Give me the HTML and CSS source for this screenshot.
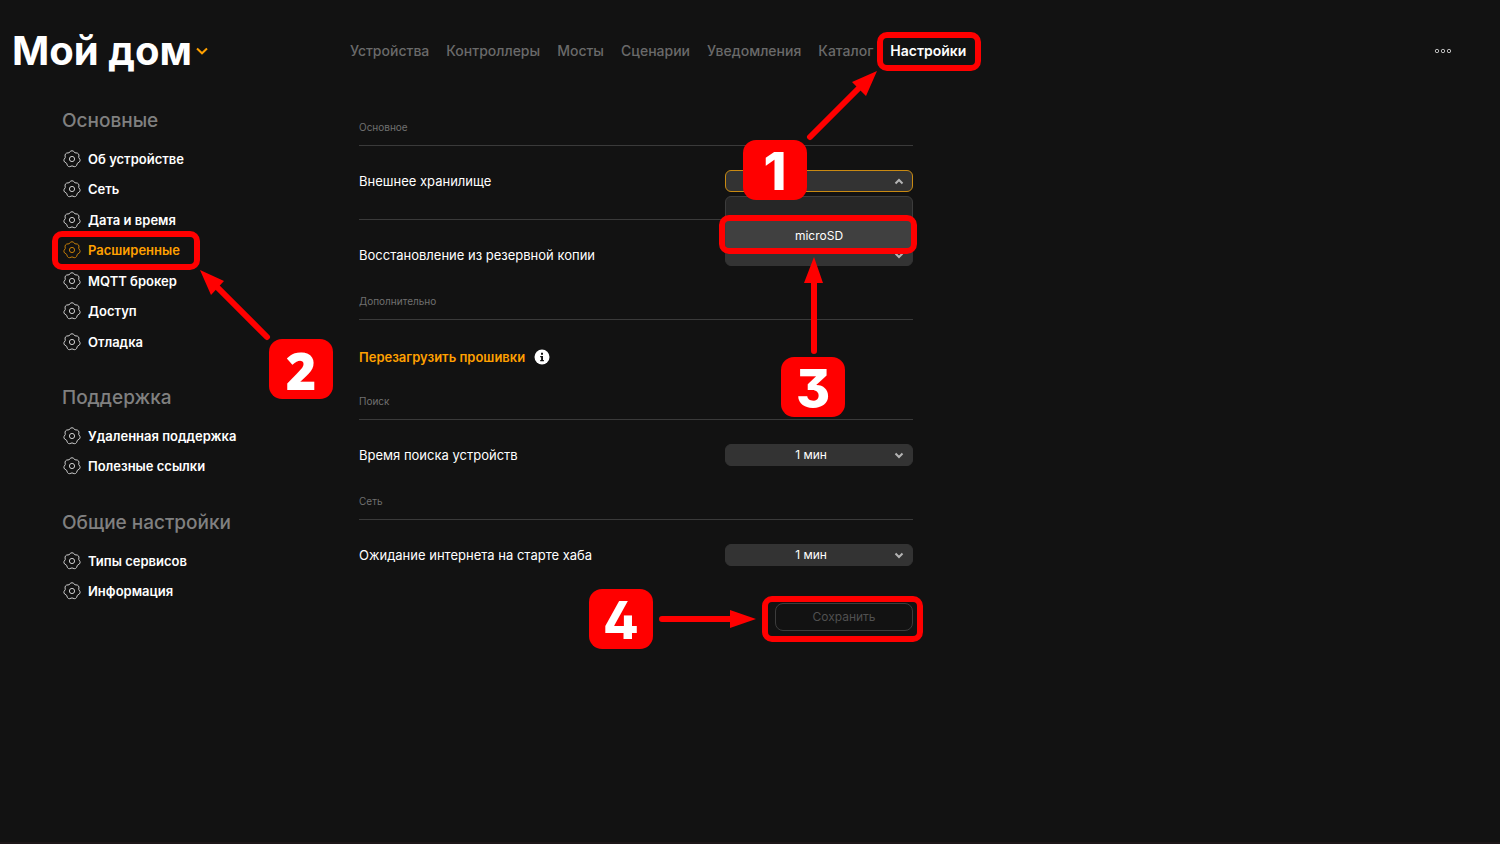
FILE: index.html
```html
<!DOCTYPE html>
<html lang="ru">
<head>
  <meta charset="UTF-8">
  <title>Мой дом - Настройки</title>
  <meta name="viewport" content="width=device-width, initial-scale=1.0">
  <link rel="stylesheet" href="styles.css">
</head>
<body>
  <svg class="sprite" aria-hidden="true">
    <symbol id="gear" viewBox="-9 -9 18 18">
      <path d="M-1.25-7.9Q0-8.6 1.25-7.9L2.99-6.22L5.4-5.91Q6.6-5.4 6.96-3.95L6.73-1.54L7.98.54Q8.4 1.9 7.42 2.98L5.39 4.3L4.55 6.58Q3.7 7.8 2.3 7.66L0 6.9L-2.3 7.66Q-3.7 7.8-4.55 6.58L-5.39 4.3L-7.42 2.98Q-8.4 1.9-7.98.54L-6.73-1.54L-6.96-3.95Q-6.6-5.4-5.4-5.91L-2.99-6.22Z"/>
      <circle r="2.6"/>
    </symbol>
  </svg>

  <header class="header">
    <h1 class="title">
      <button class="home-btn" type="button">Мой дом
        <svg class="home-arrow" viewBox="0 0 12 8"><path d="M1 1.5l5 4.8 5-4.8"/></svg>
      </button>
    </h1>
    <nav class="nav">
      <a href="#">Устройства</a>
      <a href="#">Контроллеры</a>
      <a href="#">Мосты</a>
      <a href="#">Сценарии</a>
      <a href="#">Уведомления</a>
      <a href="#">Каталог</a>
      <a href="#" class="active">Настройки</a>
    </nav>
    <button class="more" type="button" aria-label="Меню">
      <svg viewBox="0 0 18 6"><circle cx="3" cy="3" r="1.7"/><circle cx="9" cy="3" r="1.7"/><circle cx="15" cy="3" r="1.7"/></svg>
    </button>
  </header>

  <div class="layout">
    <aside class="sidebar">
      <h2>Основные</h2>
      <ul class="menu">
        <li><a href="#"><svg><use href="#gear"/></svg>Об устройстве</a></li>
        <li><a href="#"><svg><use href="#gear"/></svg>Сеть</a></li>
        <li><a href="#"><svg><use href="#gear"/></svg>Дата и время</a></li>
        <li><a href="#" class="active"><svg><use href="#gear"/></svg>Расширенные</a></li>
        <li><a href="#"><svg><use href="#gear"/></svg>MQTT брокер</a></li>
        <li><a href="#"><svg><use href="#gear"/></svg>Доступ</a></li>
        <li><a href="#"><svg><use href="#gear"/></svg>Отладка</a></li>
      </ul>
      <h2>Поддержка</h2>
      <ul class="menu">
        <li><a href="#"><svg><use href="#gear"/></svg>Удаленная поддержка</a></li>
        <li><a href="#"><svg><use href="#gear"/></svg>Полезные ссылки</a></li>
      </ul>
      <h2>Общие настройки</h2>
      <ul class="menu">
        <li><a href="#"><svg><use href="#gear"/></svg>Типы сервисов</a></li>
        <li><a href="#"><svg><use href="#gear"/></svg>Информация</a></li>
      </ul>
    </aside>

    <main class="content">
      <h3>Основное</h3>
      <div class="row line">
        <label for="storage">Внешнее хранилище</label>
        <div class="select open">
          <select id="storage"><option></option><option>microSD</option></select>
          <svg class="caret" viewBox="0 0 10 7"><path d="M1.5 5.5L5 2l3.5 3.5"/></svg>
          <ul class="options">
            <li></li>
            <li class="hover">microSD</li>
          </ul>
        </div>
      </div>
      <div class="row">
        <label for="backup">Восстановление из резервной копии</label>
        <div class="select">
          <select id="backup"><option></option></select>
          <svg class="caret" viewBox="0 0 10 7"><path d="M1.5 1.5L5 5l3.5-3.5"/></svg>
        </div>
      </div>

      <h3>Дополнительно</h3>
      <div class="row start">
        <a href="#" class="reload">Перезагрузить прошивки</a>
        <svg class="info" viewBox="0 0 16 16"><circle cx="8" cy="8" r="7.5"/><path d="M7 3.8h2v2H7zM6.2 7h2.8v4h.9v1.2H6.2V11h.9V8.2h-.9z"/></svg>
      </div>

      <h3>Поиск</h3>
      <div class="row">
        <label for="search">Время поиска устройств</label>
        <div class="select">
          <select id="search"><option>1 мин</option></select>
          <svg class="caret" viewBox="0 0 10 7"><path d="M1.5 1.5L5 5l3.5-3.5"/></svg>
        </div>
      </div>

      <h3>Сеть</h3>
      <div class="row">
        <label for="wait">Ожидание интернета на старте хаба</label>
        <div class="select">
          <select id="wait"><option>1 мин</option></select>
          <svg class="caret" viewBox="0 0 10 7"><path d="M1.5 1.5L5 5l3.5-3.5"/></svg>
        </div>
      </div>

      <div class="actions">
        <button class="save" type="button" disabled>Сохранить</button>
      </div>
    </main>
  </div>

  <!-- Пошаговые подсказки поверх страницы -->
  <svg class="arrows" width="1500" height="844" viewBox="0 0 1500 844" aria-hidden="true">
    <g class="frames">
      <rect x="880" y="35" width="98" height="33" rx="7"/>
      <rect x="55" y="234" width="142" height="33" rx="7"/>
      <rect x="722" y="218" width="192" height="33" rx="7"/>
      <rect x="765" y="599" width="155" height="40" rx="7"/>
      <path d="M810 137L862 85M267 337L215 285M814 351V280M662 619H732"/>
    </g>
    <path class="heads" d="M877 71L852 82L866 96ZM200 270L224 281L211 295ZM814 257L804 283H823ZM756 619L730 610V628Z"/>
  </svg>
  <span class="step step-1">1</span>
  <span class="step step-2">2</span>
  <span class="step step-3">3</span>
  <span class="step step-4">4</span>
</body>
</html>
```

FILE: styles.css
```css
* {
  box-sizing: border-box;
}

body {
  position: relative;
  min-height: 100vh;
  margin: 0;
  font-family: Inter, 'Noto Sans', sans-serif;
  font-size: 13px;
  line-height: 20px;
  color: #fff;
  background: #121212;
  border-bottom: 2px solid #1c1618;
}

a {
  color: inherit;
  text-decoration: none;
}

ul {
  list-style: none;
  margin: 0;
  padding: 0;
}

button {
  font: inherit;
  color: inherit;
  background: none;
  border: none;
  padding: 0;
  cursor: pointer;
}

.sprite {
  display: none;
}

/* Header */
.header {
  display: grid;
  grid-template-columns: 350px 1fr auto;
  align-items: center;
  height: 101px;
  padding-right: 48px;
}

.title {
  margin: 0;
  padding-left: 12px;
  font-size: 40px;
  line-height: 48px;
  font-weight: 700;
}

.home-btn {
  display: flex;
  align-items: center;
  gap: 4px;
}

.home-arrow {
  width: 12px;
  height: 8px;
  fill: none;
  stroke: #ffa000;
  stroke-width: 2;
}

.nav {
  display: flex;
  gap: 17px;
  font-size: 14px;
  font-weight: 500;
  color: #6a6a6a;
}

.nav .active {
  color: #fff;
  font-weight: 600;
}

.more svg {
  display: block;
  width: 18px;
  height: 6px;
  fill: none;
  stroke: #bbb;
}

/* Layout */
.layout {
  display: grid;
  grid-template-columns: 359px minmax(0, 554px);
}

.sidebar {
  padding: 8px 0 0 62px;
}

.sidebar h2 {
  margin: 0 0 11px;
  font-size: 19px;
  line-height: 24px;
  font-weight: 500;
  color: #808080;
}

.menu {
  margin-bottom: 29px;
  padding-left: 1px;
  font-weight: 600;
}

.menu li {
  height: 30px;
}

.menu li:nth-child(even) {
  height: 31px;
}

.menu a {
  display: flex;
  align-items: center;
  gap: 7px;
  height: 30px;
}

.menu svg {
  width: 18px;
  height: 18px;
  fill: none;
  stroke: #ccc;
}

.menu .active {
  color: #ffa000;
}

.menu .active svg {
  stroke: #c47d08;
}

/* Content */
.content {
  padding-top: 18px;
}

.content h3 {
  margin: 0;
  padding-bottom: 10px;
  font-size: 10px;
  line-height: 16px;
  font-weight: 400;
  color: #707070;
  border-bottom: 1px solid #3a3a3a;
}

.row {
  display: flex;
  align-items: center;
  justify-content: space-between;
  height: 73px;
  padding-bottom: 4px;
}

.row.line {
  height: 74px;
  border-bottom: 1px solid #3a3a3a;
}

.row.start {
  justify-content: flex-start;
  gap: 9px;
  padding-bottom: 0;
}

.reload {
  font-weight: 600;
  color: #ffa000;
}

.info {
  width: 16px;
  height: 16px;
  fill: #fff;
}

.info path {
  fill: #121212;
}

.select {
  position: relative;
  width: 188px;
}

.select select {
  display: block;
  width: 100%;
  height: 22px;
  padding: 0 22px 0 6px;
  font: inherit;
  font-size: 12px;
  text-align-last: center;
  color: #fff;
  appearance: none;
  background: #333;
  border: 1px solid #333;
  border-radius: 6px;
  outline: none;
}

.select.open select {
  border-color: #c98a12;
}

.caret {
  position: absolute;
  top: 8px;
  right: 9px;
  width: 10px;
  height: 7px;
  fill: none;
  stroke: #b4b4b4;
  stroke-width: 2;
}

.options {
  position: absolute;
  z-index: 1;
  top: 26px;
  left: 0;
  right: 0;
  font-size: 12px;
  text-align: center;
  background: #262626;
  border: 1px solid #3c3c3c;
  border-radius: 6px;
}

.options li {
  height: 24px;
}

.options .hover {
  height: 29px;
  line-height: 29px;
  background: #404040;
}

.actions {
  display: flex;
  justify-content: flex-end;
  padding-top: 10px;
}

.save {
  width: 138px;
  height: 28px;
  font-size: 12px;
  color: #505050;
  border: 1px solid #3c3c3c;
  border-radius: 8px;
}

/* Steps */
.arrows {
  position: absolute;
  z-index: 2;
  top: 0;
  left: 0;
  pointer-events: none;
}

.frames {
  fill: none;
  stroke: #f00;
  stroke-width: 6;
  stroke-linecap: round;
}

.heads {
  fill: #f00;
}

.step {
  position: absolute;
  z-index: 3;
  width: 64px;
  height: 60px;
  font-size: 52px;
  line-height: 64px;
  font-weight: 800;
  font-feature-settings: "cv02", "cv09";
  text-align: center;
  background: #f00;
  border-radius: 13px;
}

.step-1 {
  top: 140px;
  left: 743px;
}

.step-2 {
  top: 339px;
  left: 269px;
  font-family: 'Open Sans', sans-serif;
  line-height: 62px;
}

.step-3 {
  top: 357px;
  left: 781px;
}

.step-4 {
  top: 589px;
  left: 589px;
}
```
